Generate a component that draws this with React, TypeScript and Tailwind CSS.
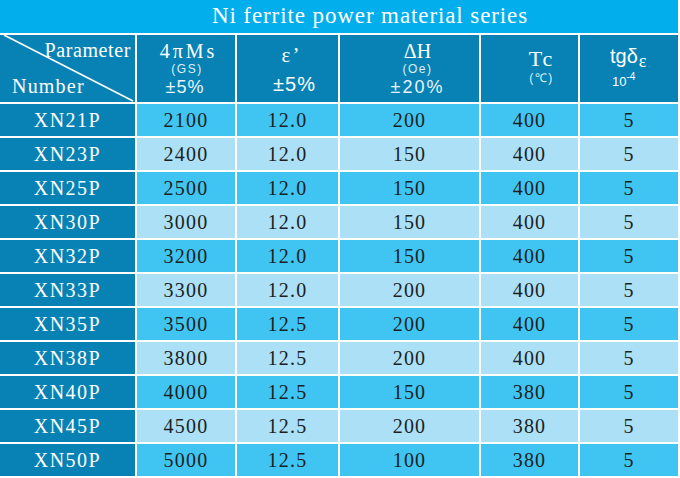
const rows = [
  ["XN21P", "2100", "12.0", "200", "400", "5"],
  ["XN23P", "2400", "12.0", "150", "400", "5"],
  ["XN25P", "2500", "12.0", "150", "400", "5"],
  ["XN30P", "3000", "12.0", "150", "400", "5"],
  ["XN32P", "3200", "12.0", "150", "400", "5"],
  ["XN33P", "3300", "12.0", "200", "400", "5"],
  ["XN35P", "3500", "12.5", "200", "400", "5"],
  ["XN38P", "3800", "12.5", "200", "400", "5"],
  ["XN40P", "4000", "12.5", "150", "380", "5"],
  ["XN45P", "4500", "12.5", "200", "380", "5"],
  ["XN50P", "5000", "12.5", "100", "380", "5"],
];

const serif = "font-['Liberation_Serif','DejaVu_Serif',serif]";
const sans = "font-['Liberation_Sans',Arial,sans-serif]";

export default function App() {
  return (
    <div className="w-[680px] h-[478px] bg-white pr-[2px] pb-[2px]">
      <div className="grid grid-cols-[135px_98px_101px_139px_97px_98px] grid-rows-[33px_67px_repeat(11,32px)] gap-[2px]">
        <div
          className={`col-span-6 bg-[#03aeed] text-white ${serif} text-[23px] tracking-[0.9px] flex items-center justify-center pl-[62px]`}
        >
          Ni ferrite power material series
        </div>

        {/* header */}
        <div className={`relative bg-[#0882b4] text-white ${serif} text-[20px] leading-[24px]`}>
          <svg className="absolute inset-0" width="135" height="67" viewBox="0 0 135 67">
            <line x1="4" y1="0" x2="133" y2="66" stroke="white" strokeWidth="1.6" />
          </svg>
          <span className="absolute right-[4px] top-[3px] tracking-[0.6px]">Parameter</span>
          <span className="absolute left-[12px] bottom-[4px] tracking-[1.2px]">Number</span>
        </div>
        <div className="bg-[#0882b4] text-white flex flex-col items-center pt-[4px] pl-[2px]">
          <span className={`${serif} text-[20px] leading-[24px] tracking-[3px] pl-[3px]`}>4πMs</span>
          <span className={`${sans} text-[12px] leading-[12px] tracking-[1.5px] text-[#dff1fa]`}>(GS)</span>
          <span className={`${sans} text-[18px] leading-[22px] tracking-[1px] text-[#e6f4fb] mt-[1px] pr-[4px]`}>±5%</span>
        </div>
        <div className="bg-[#0882b4] text-white flex flex-col items-center pt-[8px] pl-[14px]">
          <span className={`${serif} text-[21px] leading-[24px] tracking-[2px] pr-[6px]`}>ε’</span>
          <span className={`${sans} text-[20px] leading-[22px] tracking-[1px] mt-[6px]`}>±5%</span>
        </div>
        <div className="bg-[#0882b4] text-white flex flex-col items-center pt-[4px] pl-[16px]">
          <span className={`${serif} text-[20px] leading-[24px]`}>ΔH</span>
          <span className={`${sans} text-[12px] leading-[12px] tracking-[1.5px] text-[#dff1fa]`}>(Oe)</span>
          <span className={`${sans} text-[18px] leading-[22px] tracking-[2px] text-[#e6f4fb] mt-[1px]`}>±20%</span>
        </div>
        <div className="bg-[#0882b4] text-white flex flex-col items-center pt-[12px] pl-[24px]">
          <span className={`${serif} text-[22px] leading-[24px] tracking-[2px]`}>Tc</span>
          <span className={`${sans} text-[12px] leading-[14px] tracking-[1.5px] text-[#dff1fa]`}>(℃)</span>
        </div>
        <div className="bg-[#0882b4] text-white flex flex-col items-start pt-[9px] pl-[30px]">
          <span className={`${sans} text-[20px] leading-[24px] flex items-start`}>
            tgδ
            <span className={`${serif} text-[18px] leading-[18px] relative top-[8px] ml-[1px]`}>ε</span>
          </span>
          <span className={`${sans} text-[13px] leading-[16px] mt-[6px] pl-[2px] flex items-start`}>
            10
            <span className="text-[10px] leading-[10px] relative -top-[2px]">-4</span>
          </span>
        </div>

        {/* data rows */}
        {rows.map((r, i) => {
          const cell = i % 2 === 0 ? "bg-[#40c5f2]" : "bg-[#abe0f7]";
          return [
            <div
              key={r[0]}
              className={`bg-[#0882b4] text-white ${serif} text-[20px] tracking-[1.5px] flex items-center justify-center`}
            >
              {r[0]}
            </div>,
            ...r.slice(1).map((v, j) => (
              <div
                key={r[0] + j}
                className={`${cell} text-[#1b1f22] ${serif} text-[20px] tracking-[1.2px] flex items-center justify-center`}
              >
                {v}
              </div>
            )),
          ];
        })}
      </div>
    </div>
  );
}
